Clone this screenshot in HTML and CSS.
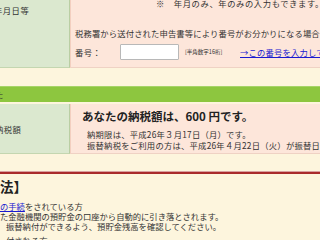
FILE: index.html
```html
<!DOCTYPE html>
<html lang="ja">
<head>
<meta charset="utf-8">
<link rel="stylesheet" href="styles.css">
</head>
<body>
<div class="page">
  <div class="row row1">
    <div class="th th1"><span class="cut1">年月日等</span></div>
    <div class="td td1">
      <p class="note">※　年月のみ、年のみの入力もできます。</p>
      <p class="desc">税務署から送付された申告書等により番号がお分かりになる場合は入力してください。</p>
      <div class="numrow">
        <span class="lbl">番号：</span>
        <input class="num" type="text">
        <span class="hint">[半角数字16桁]</span>
        <a class="go" href="#">→この番号を入力して計算する</a>
      </div>
    </div>
  </div>

  <div class="bar"><span class="cut2">た</span></div>

  <div class="row row2">
    <div class="th th2"><span class="cut3">納税額</span></div>
    <div class="td td2">
      <p class="amount">あなたの納税額は、600 円です。</p>
      <p class="sub">納期限は、平成26年３月17日（月）です。</p>
      <p class="sub">振替納税をご利用の方は、平成26年４月22日（火）が振替日です。</p>
    </div>
  </div>

  <div class="rule"></div>

  <h2 class="head">法】</h2>
  <p class="txt"><a class="link" href="#">の手続</a>をされている方</p>
  <p class="txt">た金融機関の預貯金の口座から自動的に引き落とされます。</p>
  <p class="txt ind">振替納付ができるよう、預貯金残高を確認してください。</p>
  <p class="txt ind gap">付される方</p>
</div>
</body>
</html>
```

FILE: styles.css
```css
html, body {
  margin: 0;
  padding: 0;
  background: #fdf5dd;
  overflow: hidden;
}
body {
  width: 320px;
  height: 240px;
  font-family: "Noto Sans CJK JP", "Liberation Sans", sans-serif;
  color: #333;
  font-size: 8.3px;
}
p { margin: 0; }
.page {
  margin-top: -6px;
  width: 320px;
  overflow: hidden;
}
.row {
  display: grid;
  grid-template-columns: 70px 250px;
}
.th {
  background: #dbe8cf;
  border-right: 1px solid #b9cea3;
  border-bottom: 1px solid #c4d6b0;
  white-space: nowrap;
  overflow: hidden;
  letter-spacing: 0.5px;
}
.td {
  background: #fde6da;
  border-left: 1px solid #f3cfc0;
  border-bottom: 1px solid #efd2c4;
  white-space: nowrap;
  overflow: hidden;
}
.th1 {
  padding-top: 11px;
  line-height: 10px;
}
.cut1 { margin-left: -6px; display: inline-block; }
.td1 {
  padding: 4px 0 7px 4px;
}
.note {
  line-height: 10px;
  margin-left: 81px;
  letter-spacing: 0.6px;
}
.desc {
  line-height: 10px;
  margin-top: 20px;
  letter-spacing: 0.15px;
}
.numrow {
  margin-top: 6px;
  display: flex;
  align-items: center;
  height: 16px;
}
.numrow > * { flex: none; }
.lbl { width: 45px; letter-spacing: 0.5px; }
.num {
  width: 59px;
  height: 16px;
  box-sizing: border-box;
  border: 1px solid #b8b8b8;
  border-radius: 1px;
  background: #fff;
  padding: 0;
  margin: 0;
}
.hint {
  font-size: 5.5px;
  margin-left: 6px;
  width: 55px;
}
.go {
  color: #1a1ad0;
  text-decoration: underline;
  letter-spacing: 0.2px;
}
.bar {
  margin-top: 18px;
  height: 15px;
  background: #8dc63f;
  border-top: 1px solid #a6d468;
  line-height: 15px;
  overflow: hidden;
}
.cut2 { margin-left: -5px; display: inline-block; }
.row2 { margin-top: 2px; }
.th2 {
  display: flex;
  align-items: center;
  height: 49px;
}
.cut3 { margin-left: -5px; display: inline-block; }
.td2 {
  padding: 5px 0 0 11px;
}
.amount {
  font-size: 11.5px;
  font-weight: bold;
  line-height: 14px;
  color: #222;
}
.sub {
  line-height: 11px;
  margin-left: 5px;
  letter-spacing: 0.25px;
}
.amount + .sub { margin-top: 6px; }
.rule {
  margin-top: 17px;
  height: 2px;
  background: #a92b2b;
  border-top: 1px solid #d9a0a0;
}
.head {
  margin: 4px 0 0 0;
  font-size: 13.5px;
  line-height: 16px;
  font-weight: bold;
  color: #222;
}
.txt {
  line-height: 10px;
  white-space: nowrap;
}
.head + .txt { margin-top: 7px; }
.link { color: #1a1ad0; text-decoration: underline; }
.ind { padding-left: 6px; }
.gap { margin-top: 4px; }
```
